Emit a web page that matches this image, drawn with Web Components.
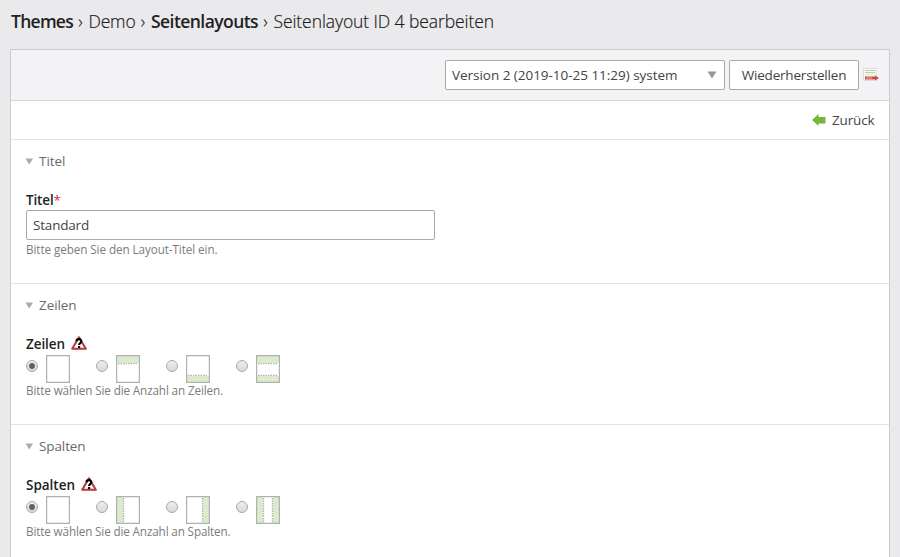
<!DOCTYPE html>
<html lang="de">
<head>
<meta charset="utf-8">
<title>Seitenlayout bearbeiten</title>
<style>
body{margin:0;background:#eaeaec;font:13.5px/20px "Open Sans","Noto Sans",sans-serif;color:#444;height:557px;overflow:hidden}
</style>
</head>
<body>
<theme-page></theme-page>
<script>
const define=(name,html,init)=>customElements.define(name,class extends HTMLElement{
  constructor(){super();this.attachShadow({mode:'open'});}
  connectedCallback(){
    const t=document.createElement('template');
    t.innerHTML=typeof html==='function'?html(this):html;
    this.shadowRoot.replaceChildren(t.content.cloneNode(true));
    if(init)init(this);
  }
});

/* Text run tracked to a given width. */
define('fit-text','<style>:host{display:inline-block;white-space:pre;flex:none}span{display:inline-block}</style><span><slot></slot></span>',el=>{
  const s=el.shadowRoot.querySelector('span'),w=+el.getAttribute('width'),n=el.textContent.length;
  s.style.letterSpacing=(w-s.getBoundingClientRect().width)/n+'px';
  el.style.width=w+'px';
});

define('bread-crumb',`<style>
:host{display:flex;height:49px;box-sizing:border-box;padding:9px 0 0 11px;font-size:17.5px;font-weight:300;line-height:25px;color:#1c1c1c;-webkit-text-stroke:.2px #1c1c1c}
b{font-weight:600;-webkit-text-stroke:0;color:#222}</style>
<b><fit-text width="62">Themes</fit-text></b><fit-text width="15.5"> › </fit-text><fit-text width="47">Demo</fit-text><fit-text width="15.5"> › </fit-text><b><fit-text width="107">Seitenlayouts</fit-text></b><fit-text width="15.5"> › </fit-text><fit-text width="220.5">Seitenlayout ID 4 bearbeiten</fit-text>`);

define('version-select',`<style>
:host{display:flex;box-sizing:border-box;width:280px;height:30px;border:1px solid #aaa;border-radius:2px;background:#fff;padding:0 7px 0 6px;align-items:center;justify-content:space-between}
svg{display:block}</style><slot></slot><svg width="10" height="8"><path d="M.5 .5H9.5L5 7.5Z" fill="#999"/></svg>`);

define('push-button',`<style>:host{display:flex;box-sizing:border-box;width:130px;height:30px;border:1px solid #aaa;border-radius:2px;background:#fff;align-items:center;justify-content:center}</style><slot></slot>`);

define('diff-icon',`<style>:host{display:block;width:16px;height:15px}svg{display:block}</style>
<svg width="16" height="15"><path d="M.5 1.5H13.5V13.5H.5Z" fill="#f8f8f8" stroke="#dcdcdc"/><path d="M2 3.5H12M2 5.5H12" stroke="#b4d493"/><path d="M2 7.5H12" stroke="#e0e3e7"/><path d="M2 9.5H12V8.5L16 11L12 13.5V12.5H2Z" fill="#cb4a40"/><path d="M3 11H9" stroke="#edb0a9"/></svg>`);

define('tool-bar',`<style>
:host{display:flex;box-sizing:border-box;height:51px;border-bottom:1px solid #d8d8da;background:#f3f3f5;padding:10px 10px 0 0;justify-content:flex-end;gap:4px}
diff-icon{margin-top:7px}</style>
<version-select><fit-text width="225.5">Version 2 (2019-10-25 11:29) system</fit-text></version-select><push-button><fit-text width="104.5">Wiederherstellen</fit-text></push-button><diff-icon></diff-icon>`);

define('back-link',`<style>
:host{display:flex;box-sizing:border-box;height:39px;border-bottom:1px solid #e4e4e6;padding:0 14.5px 0 0;align-items:center;justify-content:flex-end;gap:6px}
svg{display:block}</style>
<svg width="14" height="12"><path d="M0 6L6.5 0V3H13.5V9.5H6.5V12Z" fill="#77b936"/></svg><fit-text width="42.5">Zurück</fit-text>`);

define('form-section',el=>`<style>
:host{display:block;box-sizing:border-box;padding:11px 15px 0;border-bottom:1px solid #e4e4e6}
header{display:flex;height:20px;align-items:center;gap:5px;color:#6a6a6c}
svg{display:block;margin-left:-1px}
</style><header><svg width="9" height="7"><path d="M.5 .5H8L4.25 6.5Z" fill="#aaa"/></svg><fit-text width="${el.getAttribute('tw')}">${el.getAttribute('heading')}</fit-text></header><slot></slot>`);

define('field-label',`<style>:host{display:flex;height:20px;margin-top:19px;color:#222;font-weight:600}
::slotted(i){color:#c33;font-style:normal;font-weight:400}::slotted(warn-icon){margin:2px 0 0 6px}</style><slot></slot>`);

define('text-field',`<style>:host{display:flex;box-sizing:border-box;width:409px;height:30px;border:1px solid #aaa;border-radius:2px;background:#fff;padding-left:6px;align-items:center}</style><slot></slot>`);

define('help-text',`<style>:host{display:block;height:16px;line-height:14px;font-size:11.7px;color:#7c7c7c}</style><slot></slot>`);

define('warn-icon',`<style>:host{display:block;width:16px;height:14px}svg{display:block}</style>
<svg width="16" height="14"><path d="M8 1.2L14.8 12.8H1.2Z" fill="#fff" stroke="#b23b3b" stroke-width="2" stroke-linejoin="round"/><path d="M5.4 5.2C5.6 2.4 10.6 2.5 10.3 5.4C10.1 7.2 8.1 7 8.1 9" fill="none" stroke="#000" stroke-width="2.1"/><path d="M7 10H9.2V12H7Z"/></svg>`);

const parts={
 top:'<path d="M1 1H23V8H1Z" fill="#dcebcc"/><path d="M2 8.7H22" class="d"/>',
 bottom:'<path d="M1 21H23V27H1Z" fill="#dcebcc"/><path d="M2 20.3H22" class="d"/>',
 left:'<path d="M1 1H7V27H1Z" fill="#dcebcc"/><path d="M7.5 2V26" class="d"/>',
 right:'<path d="M17 1H23V27H17Z" fill="#dcebcc"/><path d="M16.5 2V26" class="d"/>'};
define('layout-option',el=>`<style>
:host{display:flex;width:70px;height:28px;gap:8px}svg{display:block}.r{margin-top:5px}.d{stroke:#b0b0b0;stroke-width:1.3;stroke-dasharray:1.5 1;fill:none}</style>
<svg class="r" width="12" height="12"><defs><linearGradient id="g" x2="0" y2="1"><stop stop-color="#eee"/><stop offset="1" stop-color="#d8d8d8"/></linearGradient></defs><circle cx="6" cy="6" r="5.5" fill="url(#g)" stroke="#aaa"/>${el.hasAttribute('checked')?'<circle cx="6" cy="6" r="2.9" fill="#606060"/>':''}</svg>
<svg width="24" height="28"><path d="M.5 .5H23.5V27.5H.5Z" fill="#fff"/>${(el.getAttribute('parts')||'').split(' ').map(p=>parts[p]||'').join('')}<path d="M.6 .6H23.4V27.4H.6Z" fill="none" stroke="#b0b0b0" stroke-width="1.2"/></svg>`);

define('option-row','<style>:host{display:flex;margin-top:1px;height:28px}</style><slot></slot>');

define('theme-page',`<style>
:host{display:block}
main{box-sizing:border-box;margin:0 10px;width:880px;height:520px;border:1px solid #ccccce;background:#fff}
.a{height:144px}.b{height:141px}</style>
<bread-crumb></bread-crumb>
<main><tool-bar></tool-bar><back-link></back-link>
<form-section class="a" heading="Titel" tw="26.5"><field-label><fit-text width="27.5">Titel</fit-text><i>*</i></field-label><text-field><fit-text width="56">Standard</fit-text></text-field><help-text style="margin-top:2px"><fit-text width="191.5">Bitte geben Sie den Layout-Titel ein.</fit-text></help-text></form-section>
<form-section class="b" heading="Zeilen" tw="37.5"><field-label><fit-text width="39">Zeilen</fit-text><warn-icon></warn-icon></field-label><option-row><layout-option checked></layout-option><layout-option parts="top"></layout-option><layout-option parts="bottom"></layout-option><layout-option parts="top bottom"></layout-option></option-row><help-text><fit-text width="197">Bitte wählen Sie die Anzahl an Zeilen.</fit-text></help-text></form-section>
<form-section class="b" heading="Spalten" tw="46.5"><field-label><fit-text width="49">Spalten</fit-text><warn-icon></warn-icon></field-label><option-row><layout-option checked></layout-option><layout-option parts="left"></layout-option><layout-option parts="right"></layout-option><layout-option parts="left right"></layout-option></option-row><help-text><fit-text width="204.5">Bitte wählen Sie die Anzahl an Spalten.</fit-text></help-text></form-section>
</main>`);
</script>
</body>
</html>
